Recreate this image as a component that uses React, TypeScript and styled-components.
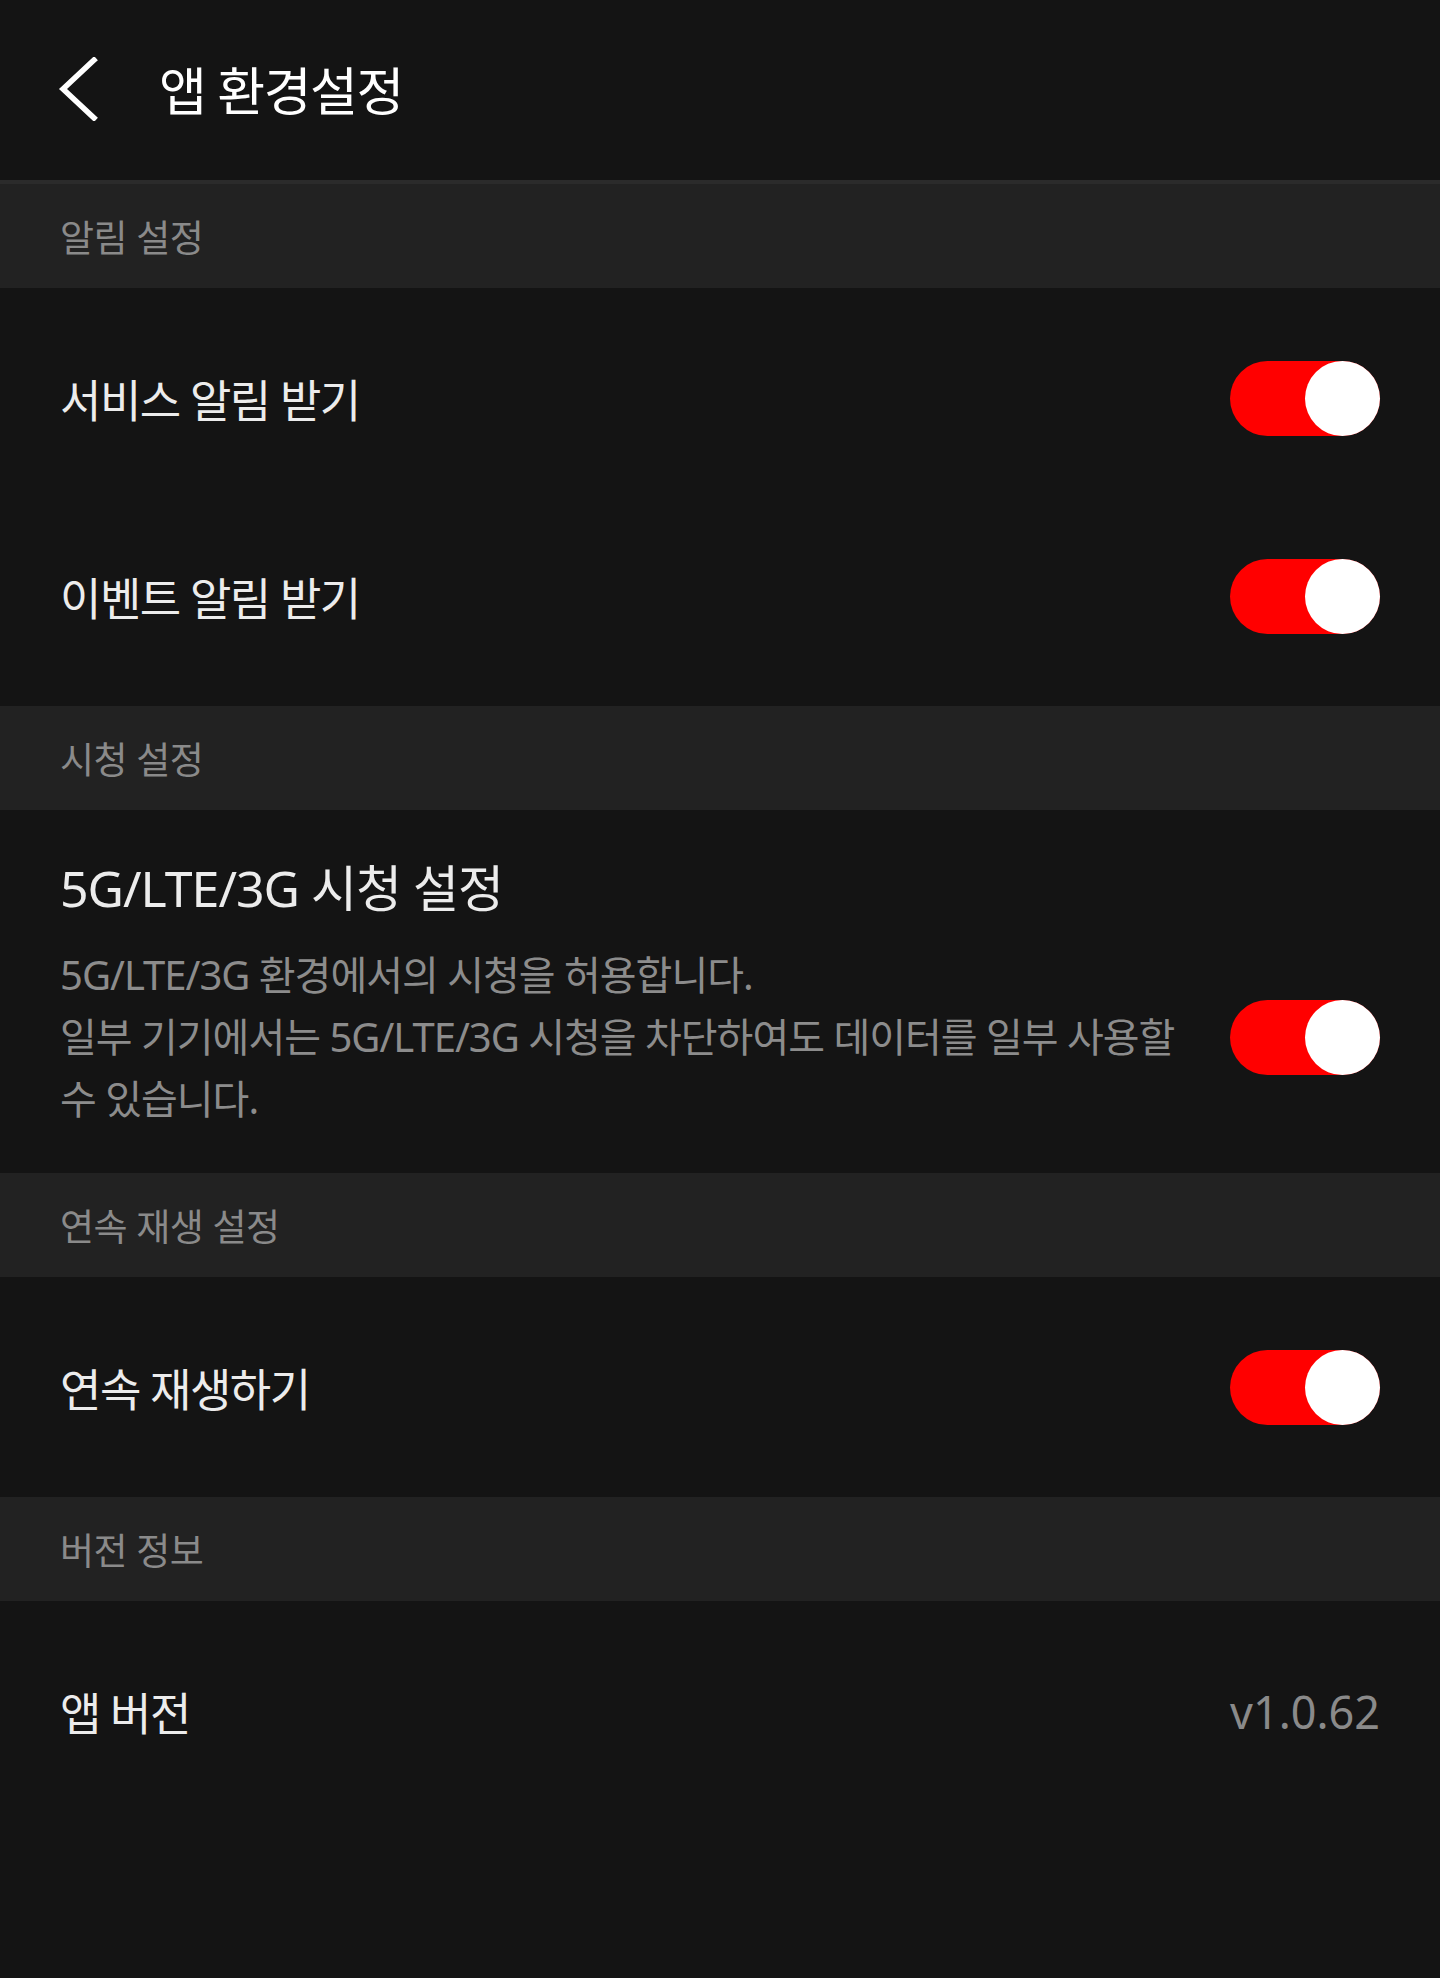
import { FC } from 'react'
import styled, { createGlobalStyle } from 'styled-components'

const GlobalStyle = createGlobalStyle`
  html, body {
    margin: 0;
    padding: 0;
    background: #141414;
  }
  body {
    font-family: 'Noto Sans', 'Noto Sans CJK KR', sans-serif;
    color: #ececec;
    min-height: 1978px;
  }
  * {
    box-sizing: border-box;
  }
`

interface IToggle {
  on: boolean
}

const Toggle: FC<IToggle> = ({ on }) => (
  <ToggleTrack $on={on} role="switch" aria-checked={on}>
    <ToggleKnob $on={on} />
  </ToggleTrack>
)

const BackIcon = () => (
  <svg width="40" height="64" viewBox="0 0 40 64" aria-label="back">
    <path
      d="M36 3 L5 32 L36 61"
      fill="none"
      stroke="#ffffff"
      strokeWidth="5.5"
      strokeLinecap="square"
    />
  </svg>
)

const App: FC = () => {
  return (
    <Page>
      <GlobalStyle />
      <Header>
        <BackButton>
          <BackIcon />
        </BackButton>
        <HeaderTitle>앱 환경설정</HeaderTitle>
      </Header>

      <SectionHeader>알림 설정</SectionHeader>
      <Group>
        <Row>
          <RowLabel>서비스 알림 받기</RowLabel>
          <Toggle on />
        </Row>
        <Row>
          <RowLabel>이벤트 알림 받기</RowLabel>
          <Toggle on />
        </Row>
      </Group>

      <SectionHeader>시청 설정</SectionHeader>
      <Group>
        <DetailRow>
          <DetailTitle>5G/LTE/3G 시청 설정</DetailTitle>
          <DetailBody>
            <Description>
              5G/LTE/3G 환경에서의 시청을 허용합니다.
              <br />
              일부 기기에서는 5G/LTE/3G 시청을 차단하여도 데이터를 일부 사용할
              수 있습니다.
            </Description>
            <Toggle on />
          </DetailBody>
        </DetailRow>
      </Group>

      <SectionHeader>연속 재생 설정</SectionHeader>
      <Group>
        <Row>
          <RowLabel>연속 재생하기</RowLabel>
          <Toggle on />
        </Row>
      </Group>

      <SectionHeader>버전 정보</SectionHeader>
      <Group>
        <Row>
          <RowLabel>앱 버전</RowLabel>
          <VersionText>v1.0.62</VersionText>
        </Row>
      </Group>
    </Page>
  )
}

export default App

const Page = styled.div`
  width: 1440px;
  min-height: 1978px;
  background: #141414;
  display: flex;
  flex-direction: column;
`
const Header = styled.header`
  height: 184px;
  display: flex;
  align-items: center;
  gap: 61px;
  padding: 0 0 4px 58px;
  border-bottom: 4px solid #2b2b2b;
`
const BackButton = styled.button`
  display: flex;
  align-items: center;
  background: none;
  border: none;
  padding: 0;
  margin-top: 2px;
`
const HeaderTitle = styled.h1`
  margin: 0;
  font-size: 52px;
  font-weight: 400;
  color: #ffffff;
  letter-spacing: -1.5px;
`
const SectionHeader = styled.div`
  height: 104px;
  display: flex;
  align-items: center;
  padding: 0 60px;
  background: #222222;
  color: #8a8a8a;
  font-size: 37px;
  letter-spacing: -0.5px;
`
const Group = styled.div`
  display: flex;
  flex-direction: column;
  padding: 11px 0;
`
const Row = styled.div`
  height: 198px;
  display: flex;
  align-items: center;
  justify-content: space-between;
  padding: 0 60px;
`
const RowLabel = styled.span`
  font-size: 45px;
  color: #ececec;
  letter-spacing: -1.5px;
`
const DetailRow = styled.div`
  display: flex;
  flex-direction: column;
  gap: 22px;
  padding: 34px 60px 32px;
`
const DetailTitle = styled.span`
  font-size: 50px;
  line-height: 67px;
  color: #ececec;
  letter-spacing: -1px;
`
const DetailBody = styled.div`
  display: flex;
  align-items: center;
  justify-content: space-between;
  gap: 20px;
`
const Description = styled.p`
  margin: 0;
  flex: 1;
  font-size: 40px;
  line-height: 62px;
  color: #8c8c8c;
  letter-spacing: -1px;
  word-break: keep-all;
`
const VersionText = styled.span`
  font-size: 45px;
  color: #8a8a8a;
`
const ToggleTrack = styled.div<{ $on: boolean }>`
  flex-shrink: 0;
  width: 150px;
  height: 75px;
  border-radius: 38px;
  background: ${({ $on }) => ($on ? '#ff0000' : '#555555')};
  display: flex;
  justify-content: ${({ $on }) => ($on ? 'flex-end' : 'flex-start')};
`
const ToggleKnob = styled.div<{ $on: boolean }>`
  width: 75px;
  height: 75px;
  border-radius: 50%;
  background: #ffffff;
`
